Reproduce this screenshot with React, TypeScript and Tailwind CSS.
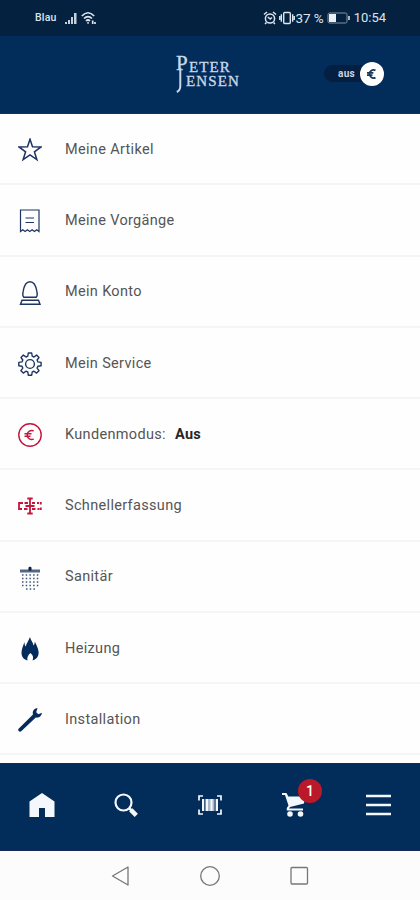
import type { ReactNode } from "react";

interface MenuEntry {
  label: string;
  value?: string;
  icon: ReactNode;
}

const euroPath = "M15.800 8a4.500 4.500 0 1 0 0 8M6.500 10.700h7M6.500 13.300h6";

const entries: MenuEntry[] = [
  {
    label: "Meine Artikel",
    icon: (
      <path d="M12 1.2l2.500 7.600 8.600.1-6.700 4.900 2.500 7.900L12 17l-6.900 4.700 2.500-7.900L.9 8.900l8.600-.1z" />
    ),
  },
  {
    label: "Meine Vorgänge",
    icon: (
      <g strokeWidth="1.2">
        <path d="M2.500 1h18.500v21.500l-2.300-1.800-2.300 1.800-2.300-1.800-2.300 1.800-2.400-1.800-2.300 1.800-2.300-1.800-2.300 1.800z" />
        <path d="M7.500 9h8.500M7.500 13.500h8.500" />
      </g>
    ),
  },
  {
    label: "Mein Konto",
    icon: (
      <g strokeWidth="1.4">
        <path d="M5.800 16.300c-1.600-1.700-1.200-3.600-.7-5.600C6 5 8 .8 12 .8s6 4.200 6.900 9.900c.5 2 .9 3.900-.7 5.600z" />
        <path d="M4 19.300h16.500l1.500 4H2.500z" />
      </g>
    ),
  },
  {
    label: "Mein Service",
    icon: (
      <g strokeWidth="1.400">
        <path
          strokeLinejoin="round"
          d="M9.800 4.200l.5-3.200h3.400l.5 3.200 1.800.8 2.600-1.900 2.400 2.400L19.100 8l.8 1.900 3.200.5v3.400l-3.200.5-.8 1.800 1.900 2.600-2.400 2.400-2.600-1.900-1.800.8-.5 3.200h-3.400l-.5-3.200-1.900-.8-2.600 1.900-2.400-2.400 1.900-2.600-.8-1.800-3.200-.5v-3.400l3.200-.5.8-1.900L3 5.500l2.400-2.400L8 5z"
        />
        <circle cx="12" cy="12" r="4.400" />
      </g>
    ),
  },
  {
    label: "Kundenmodus:",
    value: "Aus",
    icon: (
      <g stroke="#c4173c" strokeWidth="1.400">
        <circle cx="12" cy="12" r="11.200" />
        <path d={euroPath} />
      </g>
    ),
  },
  {
    label: "Schnellerfassung",
    icon: (
      <g stroke="#c4173c" strokeWidth="1.800">
        <path d="M12 4v16M9.300 4.500h5.400M9.300 19.500h5.400M7.500 12h9" />
        <path d="M5 9H1v6h3M6.500 9H10M6 15h3.500M14 9h3M14 15h3.500M19 9h2M19.500 15h2M22.800 8v2.500M22.800 13.500V16" />
      </g>
    ),
  },
  {
    label: "Sanitär",
    icon: (
      <g stroke="none">
        <path fill="#536887" d="M2 3.500h20v3H2z" />
        <path fill="#071d42" d="M10.500 1.500l1.500-1 1.500 1v3h-3z" />
        <path
          fill="none"
          stroke="#3e5375"
          strokeWidth="1.500"
          strokeDasharray="1.500 2.200"
          d="M4 9h17M4 12.500h17M4 16h17M4 19.500h17M8 23h9"
        />
      </g>
    ),
  },
  {
    label: "Heizung",
    icon: (
      <path
        stroke="none"
        fill="#032b5b"
        d="M12 0c.4 3 2.900 5 3.500 8.500.8-.8 1.300-2 1.300-4 1.700 3.500 4.200 8.500 3.800 12-.3 3.500-2.600 6-6.100 7 1.500-3.500-.1-5.800-2-7.500-2.400 2-3.800 4.500-3 7.500-3.500-.8-5.900-3.500-6-7.500 0-3.500 1.700-7.500 3-11 0 2.300.4 3.700 1.300 4.500C8.300 6.500 10.500 4 12 0z"
      />
    ),
  },
  {
    label: "Installation",
    icon: (
      <path
        stroke="none"
        fill="#032b5b"
        d="M19.500.1c-3.200.5-5.600 3-4.500 6.400L.6 20.700c-1.300 1.700.8 4 2.600 2.600L17.800 9.500c3 .7 5.900-1.500 6.100-4.800l-3.500 1.600-2.200-2z"
      />
    ),
  },
];

function StatusBar() {
  return (
    <div className="flex h-9 shrink-0 items-center bg-[#042240] pr-[34px] pl-[35px] text-[#dce5ed]">
      <span className="w-[29px] text-[10.500px] font-medium tracking-[0.200px]">Blau</span>
      <svg className="h-[13px] w-[14px]" viewBox="0 0 14 13" fill="#c5d0db">
        <path d="M1 10h2v2H1zM4 8h2v4H4zM7 5h2v7H7zM10 1h2.500v11H10z" />
      </svg>
      <svg className="ml-[3px] h-[14px] w-[16px]" viewBox="0 0 16 14" fill="none" stroke="currentColor" strokeWidth="1.700">
        <path d="M.8 5q6.200-6.500 12.400 0M3 7.500q4-4 8 0M5 10q2-2 4 0" />
        <path d="M6.300 11.800h1.500M11.700 9.500V13M14 11v2" />
      </svg>
      <div className="ml-auto flex items-center">
        <svg className="mr-[2px] h-[14px] w-[14px]" viewBox="0 0 14 14" fill="none" stroke="currentColor" strokeWidth="1.500">
          <circle cx="7" cy="7.500" r="4.600" />
          <path d="M1 3.500L4 1M10 1l3 2.500M4.800 6l2.400 2L9 6.500M3.500 11.500L2 13M10.500 11.500L12 13" />
        </svg>
        <svg className="mr-[1px] h-[14px] w-[16px]" viewBox="0 0 17 14" fill="none" stroke="currentColor" strokeWidth="1.500">
          <rect x="5" y="1.200" width="7" height="11.600" rx="1" />
          <path d="M2.500 3v8M14.500 3v8M.8 5v4M16.200 5v4" />
        </svg>
        <span className="text-[13.500px] tracking-[-0.100px] whitespace-nowrap">37 %</span>
        <svg className="ml-[3px] h-[12px] w-[24px]" viewBox="0 0 24 12" fill="none">
          <rect x="1" y="1" width="19" height="10" rx="1.500" stroke="#8292a1" />
          <path fill="#e9f0f7" d="M2 2h7v8H2z" />
          <path stroke="currentColor" strokeWidth="1.500" d="M22 4v4" />
        </svg>
        <span className="ml-[3px] text-[13px]">10:54</span>
      </div>
    </div>
  );
}

function Logo() {
  return (
    <div className="flex h-[46px] w-[70px] justify-self-center pl-px font-['Liberation_Serif',serif] text-[#c9d8e8]">
      <svg className="h-[46px] w-[10px] shrink-0 overflow-visible" viewBox="0 0 10 46" fill="none" stroke="currentColor">
        <text x="0" y="17.500" fontSize="21" fill="currentColor" strokeWidth="0.350">P</text>
        <path strokeWidth="2" d="M4.300 16v18q0 4.500-3.500 6" />
      </svg>
      <p className="mt-[8px] indent-[3px] text-[15px] leading-[14px] tracking-[1.100px] whitespace-nowrap [-webkit-text-stroke:0.350px_currentColor]">
        ETER
        <br />
        ENSEN
      </p>
    </div>
  );
}

function Header() {
  return (
    <header className="grid h-[78px] shrink-0 grid-cols-3 items-center border-b border-[#1c3053] bg-[#022c5a]">
      <span />
      <Logo />
      <div className="mr-9 mb-[2px] flex h-[17px] w-[60px] items-center justify-end justify-self-end rounded-full bg-[#051f42]">
        <span className="mr-[5px] text-[10px] font-bold tracking-[0.300px] text-[#cbd4df]">aus</span>
        <div className="flex size-6 shrink-0 items-center justify-center rounded-full bg-white">
          <svg className="size-[22px]" viewBox="0 0 24 24" fill="none" stroke="#173759" strokeWidth="2">
            <path d={euroPath} />
          </svg>
        </div>
      </div>
    </header>
  );
}

function MenuRow({ label, value, icon }: MenuEntry) {
  return (
    <li className="flex h-[71.250px] items-center border-b-2 border-[#f5f5f6] pl-[18px] text-[14.500px] tracking-[0.330px] text-[#555]">
      <svg className="mt-[3px] size-6 shrink-0" viewBox="0 0 24 24" fill="none" stroke="#1e3562" strokeWidth="1.500">
        {icon}
      </svg>
      <span className="mt-[2px] ml-[23px]">{label}</span>
      {value && <span className="mt-[2px] ml-[9px] font-bold text-[#262626]">{value}</span>}
    </li>
  );
}

function TabBar() {
  return (
    <nav className="grid h-[88px] shrink-0 grid-cols-5 items-center justify-items-center border-y border-[#172857] bg-[#022d5a] pb-[4px] text-[#f4f8fc]">
      <svg className="h-6 w-[26px]" viewBox="0 0 26 24" fill="currentColor">
        <path d="M13 0l12.500 8.500V24h-9.500v-9h-6v9H.5V8.500z" />
      </svg>
      <svg className="size-6" viewBox="0 0 24 24" fill="none" stroke="currentColor">
        <circle cx="9.500" cy="9.500" r="8" strokeWidth="2.200" />
        <path strokeWidth="2.500" d="M15 15l3 3" />
        <path strokeWidth="4.500" d="M16.800 16.800l5.500 5.500" />
      </svg>
      <svg className="h-5 w-6" viewBox="0 0 24 20" fill="none" stroke="currentColor">
        <path strokeWidth="1.700" d="M5 1H1v4.500M19 1h4v4.500M1 14.500V19h4M23 14.500V19h-4" />
        <path fill="#a9b8ca" stroke="none" d="M4 4h16v12H4z" />
        <path strokeWidth="2" d="M5 4v12M9 4v12M13.500 4v12M19 4v12" />
        <path stroke="#123a66" d="M6.800 4v12M17 4v12" />
      </svg>
      <div className="relative">
        <svg className="h-6 w-6" viewBox="0 0 24 24" fill="currentColor">
          <path d="M0 0h4.500l1.800 3.500H23L22 10.500l-14 3.500-1 1.500h14v2H4.800V15l1.700-2.500L3 2H0z" />
          <circle cx="8" cy="21" r="2.800" />
          <circle cx="18.500" cy="21" r="2.800" />
        </svg>
        <span className="absolute -top-[14px] left-4 flex size-6 items-center justify-center rounded-full bg-[#b91929] text-[14px] font-medium text-white">
          1
        </span>
      </div>
      <svg className="h-[22px] w-[25px]" viewBox="0 0 25 22" stroke="currentColor" strokeWidth="2.500">
        <path d="M0 2h25M0 11h25M0 20h25" />
      </svg>
    </nav>
  );
}

function SystemNav() {
  return (
    <div className="flex h-[49px] shrink-0 items-center justify-center gap-[68px] bg-[#fcfcfc] pt-px">
      <svg className="size-[22px]" viewBox="0 0 22 22" fill="none" stroke="#777" strokeWidth="1.300">
        <path strokeLinejoin="round" d="M3.500 11L19 2v18z" />
      </svg>
      <svg className="size-[22px]" viewBox="0 0 22 22" fill="none" stroke="#777" strokeWidth="1.300">
        <circle cx="11" cy="11" r="9.300" />
      </svg>
      <svg className="size-[22px]" viewBox="0 0 22 22" fill="none" stroke="#777" strokeWidth="1.300">
        <rect x="2" y="2.500" width="16.500" height="16.500" rx="1" />
      </svg>
    </div>
  );
}

export default function App() {
  return (
    <div className="flex h-[900px] w-[420px] flex-col overflow-hidden bg-white font-[Roboto,sans-serif]">
      <StatusBar />
      <Header />
      <ul className="min-h-0 flex-1 overflow-hidden bg-[#fefefe]">
        {entries.map((entry) => (
          <MenuRow key={entry.label} {...entry} />
        ))}
      </ul>
      <TabBar />
      <SystemNav />
    </div>
  );
}
